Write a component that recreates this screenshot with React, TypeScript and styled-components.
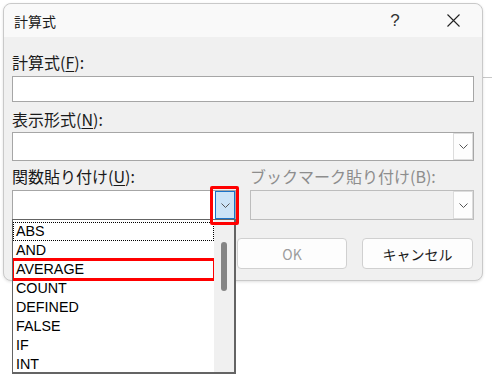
import styled, { createGlobalStyle } from 'styled-components';

const GlobalStyle = createGlobalStyle`
  body {
    margin: 0;
    background: #ffffff;
    font-family: 'Noto Sans CJK JP', 'Noto Sans', sans-serif;
  }
`;

const Page = styled.div`
  position: relative;
  width: 492px;
  height: 380px;
  padding: 3px 0 0 3px;
  box-sizing: border-box;
  overflow: hidden;
`;

const BehindEdge = styled.div`
  position: absolute;
  left: 483px;
  top: 77px;
  width: 9px;
  height: 1px;
  background: #c8c8c8;
`;

const Dialog = styled.div`
  position: relative;
  width: 480px;
  height: 278px;
  box-sizing: border-box;
  border: 1px solid #c9c9c9;
  border-radius: 8px;
  background: #f0f0f0;
  box-shadow: 0 1px 3px rgba(0, 0, 0, 0.12);
`;

const TitleBar = styled.div`
  display: flex;
  align-items: center;
  height: 33px;
  padding-left: 10px;
  padding-right: 6px;
  background: #f9f9f9;
  border-radius: 8px 8px 0 0;
`;

const Title = styled.span`
  flex: 1;
  font-size: 14px;
  color: #1a1a1a;
`;

const TitleButton = styled.div<{ $width: number }>`
  display: flex;
  align-items: center;
  justify-content: center;
  width: ${(p) => p.$width}px;
  height: 33px;
  font-family: 'Liberation Sans', sans-serif;
  font-size: 17px;
  color: #333;
`;

const Body = styled.div`
  padding: 14px 8px 0 8px;
`;

const Label = styled.div<{ $top?: number; $bottom?: number; $disabled?: boolean }>`
  height: 22px;
  line-height: 22px;
  margin-top: ${(p) => p.$top ?? 0}px;
  margin-bottom: ${(p) => p.$bottom ?? 3}px;
  font-size: 16px;
  color: ${(p) => (p.$disabled ? '#8d8d8d' : '#1a1a1a')};
  white-space: nowrap;

  u {
    text-underline-offset: 2px;
  }
`;

const TextBox = styled.div<{ $height: number }>`
  height: ${(p) => p.$height}px;
  box-sizing: border-box;
  border: 1px solid #a6a6a6;
  background: #ffffff;
`;

const Combo = styled.div<{ $height: number; $disabled?: boolean }>`
  position: relative;
  display: flex;
  justify-content: flex-end;
  height: ${(p) => p.$height}px;
  box-sizing: border-box;
  border: 1px solid ${(p) => (p.$disabled ? '#bdbdbd' : '#a6a6a6')};
  background: ${(p) => (p.$disabled ? '#f0f0f0' : '#ffffff')};
`;

const DropButton = styled.div<{ $active?: boolean }>`
  display: flex;
  align-items: center;
  justify-content: center;
  width: 20px;
  box-sizing: border-box;
  border: 1px solid ${(p) => (p.$active ? '#1a73c8' : '#dcdcdc')};
  background: ${(p) => (p.$active ? '#cce4f7' : '#fdfdfd')};
`;

const Row = styled.div`
  display: grid;
  grid-template-columns: 224px 1fr;
  column-gap: 14px;
  margin-top: 4px;
`;

const Buttons = styled.div`
  display: flex;
  justify-content: flex-end;
  gap: 15px;
  margin-top: 18px;
  padding-right: 1px;
`;

const PushButton = styled.div<{ $width: number; $disabled?: boolean }>`
  display: flex;
  align-items: center;
  justify-content: center;
  width: ${(p) => p.$width}px;
  height: 31px;
  box-sizing: border-box;
  border: 1px solid #d0d0d0;
  border-radius: 4px;
  background: #fdfdfd;
  font-size: 14px;
  color: ${(p) => (p.$disabled ? '#9d9d9d' : '#1a1a1a')};
`;

const Annotation = styled.div`
  position: absolute;
  right: -4px;
  top: -5px;
  width: 29px;
  height: 39px;
  box-sizing: border-box;
  border: 3px solid #ff0000;
  border-radius: 2px;
  z-index: 3;
`;

const Popup = styled.div`
  position: absolute;
  left: -1px;
  top: 28px;
  width: 224px;
  height: 155px;
  box-sizing: border-box;
  display: flex;
  border: 1px solid #646464;
  border-right-width: 2px;
  border-bottom-width: 2px;
  background: #ffffff;
  z-index: 2;
`;

const Items = styled.div`
  flex: 1;
  padding-top: 2px;
  overflow: hidden;
`;

const Item = styled.div<{ $focus?: boolean; $marked?: boolean }>`
  height: 19px;
  line-height: 19px;
  padding-left: 3px;
  font-family: 'Liberation Sans', Arial, sans-serif;
  font-size: 14.3px;
  color: #000;
  ${(p) => p.$focus && 'outline: 1px dotted #000; outline-offset: -1px;'}
  ${(p) => p.$marked && 'outline: 3px solid #ff0000; outline-offset: -1px;'}
`;

const Track = styled.div`
  position: relative;
  width: 20px;
  background: #f0f0f0;
`;

const Thumb = styled.div`
  position: absolute;
  left: 7px;
  top: 22px;
  width: 6px;
  height: 49px;
  border-radius: 3px;
  background: #858585;
`;

const Chevron = () => (
  <svg width="9" height="5" viewBox="0 0 9 5">
    <polyline points="0.5,0.5 4.5,4.5 8.5,0.5" fill="none" stroke="#555" strokeWidth="1" />
  </svg>
);

const functions = ['ABS', 'AND', 'AVERAGE', 'COUNT', 'DEFINED', 'FALSE', 'IF', 'INT'];

export default function App() {
  return (
    <Page>
      <GlobalStyle />
      <BehindEdge />
      <Dialog>
        <TitleBar>
          <Title>計算式</Title>
          <TitleButton $width={70}>?</TitleButton>
          <TitleButton $width={46}>
            <svg width="13" height="13" viewBox="0 0 13 13">
              <path d="M0.5 0.5 L12.5 12.5 M12.5 0.5 L0.5 12.5" stroke="#222" strokeWidth="1.1" />
            </svg>
          </TitleButton>
        </TitleBar>
        <Body>
          <Label>
            計算式(<u>F</u>):
          </Label>
          <TextBox $height={26} />

          <Label $top={6} $bottom={2}>
            表示形式(<u>N</u>):
          </Label>
          <Combo $height={29}>
            <DropButton>
              <Chevron />
            </DropButton>
          </Combo>

          <Row>
            <div>
              <Label>
                関数貼り付け(<u>U</u>):
              </Label>
              <Combo $height={30}>
                <DropButton $active>
                  <Chevron />
                </DropButton>
                <Annotation />
                <Popup>
                  <Items>
                    {functions.map((name, i) => (
                      <Item key={name} $focus={i === 0} $marked={name === 'AVERAGE'}>
                        {name}
                      </Item>
                    ))}
                  </Items>
                  <Track>
                    <Thumb />
                  </Track>
                </Popup>
              </Combo>
            </div>
            <div>
              <Label $disabled>ブックマーク貼り付け(B):</Label>
              <Combo $height={30} $disabled>
                <DropButton>
                  <Chevron />
                </DropButton>
              </Combo>
            </div>
          </Row>

          <Buttons>
            <PushButton $width={110} $disabled>
              OK
            </PushButton>
            <PushButton $width={111}>キャンセル</PushButton>
          </Buttons>
        </Body>
      </Dialog>
    </Page>
  );
}
